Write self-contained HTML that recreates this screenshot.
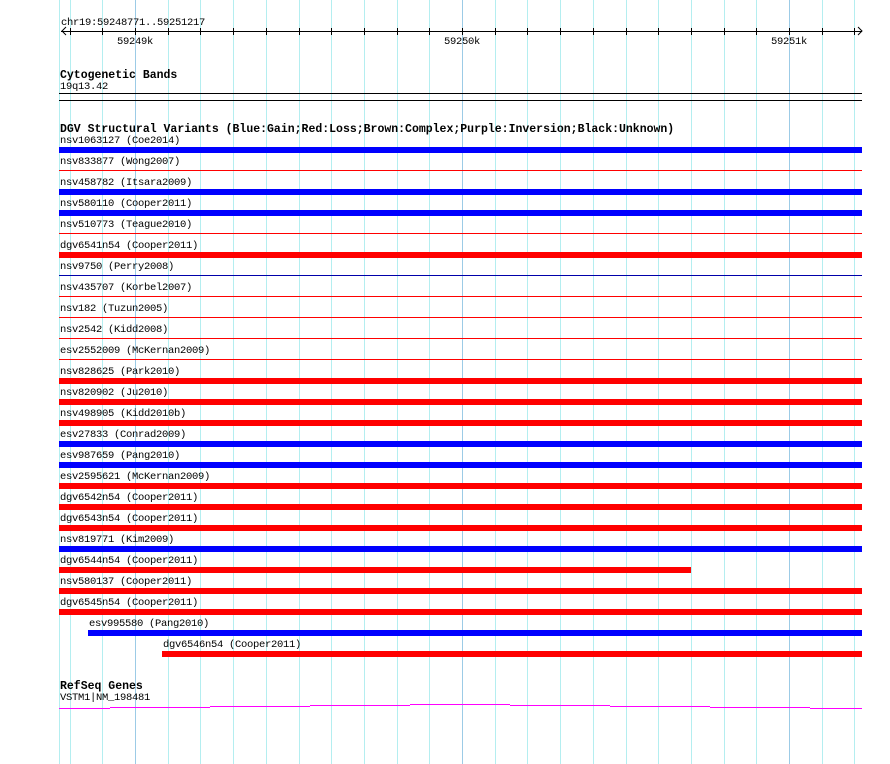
<!DOCTYPE html>
<html><head><meta charset="utf-8"><style>
body{margin:0;width:890px;height:764px;background:#fff;position:relative;overflow:hidden;font-family:"Liberation Mono","DejaVu Sans Mono",monospace;}
.g{position:absolute;top:0;height:764px;width:1px;background:#b4eef0;}
.G{background:#9ccbe6;}
.t{position:absolute;font-size:10.5px;letter-spacing:-0.3px;line-height:12px;color:#000;white-space:pre;}
.b{position:absolute;font-size:11.5px;line-height:13px;font-weight:bold;white-space:pre;}
.r{position:absolute;}
</style></head><body>
<div id="grid"></div>
<div class="t" style="left:61px;top:17px">chr19:59248771..59251217</div>
<div class="r" style="left:61px;top:31px;width:801px;height:1px;background:#000"></div>
<svg class="r" style="left:0;top:0" width="890" height="60">
<path d="M66 27 L62 31 L66 35 M858 27 L862 31 L858 35" stroke="#000" fill="none"/>
<g id="ticks" stroke="#000"></g>
</svg>
<div class="t" style="left:117px;top:36px">59249k</div>
<div class="t" style="left:444px;top:36px">59250k</div>
<div class="t" style="left:771px;top:36px">59251k</div>
<div class="b" style="left:60px;top:69px">Cytogenetic Bands</div>
<div class="t" style="left:60px;top:81px">19q13.42</div>
<div class="r" style="left:59px;top:93px;width:803px;height:1px;background:#000"></div>
<div class="r" style="left:59px;top:100px;width:803px;height:1px;background:#000"></div>
<div class="b" style="left:60px;top:123px">DGV Structural Variants (Blue:Gain;Red:Loss;Brown:Complex;Purple:Inversion;Black:Unknown)</div>
<div id="rows"></div>
<div class="b" style="left:60px;top:680px">RefSeq Genes</div>
<div class="t" style="left:60px;top:692px">VSTM1|NM_198481</div>
<svg class="r" style="left:0;top:0" width="890" height="764">
<path d="M59 708.5H110M110 707.5H210M210 706.5H310M310 705.5H410M410 704.5H510M510 705.5H610M610 706.5H710M710 707.5H810M810 708.5H862" stroke="#f0f" stroke-width="1" fill="none"/>
</svg>
<script>
var g=document.getElementById('grid'),h='';
h+='<div class="g" style="left:59px"></div>';
for(var k=-2;k<=22;k++){var x=Math.round(135+32.7*k);h+='<div class="g'+((k%10==0)?' G':'')+'" style="left:'+x+'px"></div>';}
g.innerHTML=h;
var tk=document.getElementById('ticks'),s='';
for(var k=-2;k<=22;k++){var x=Math.round(135+32.7*k)+0.5;s+='<line x1="'+x+'" y1="28" x2="'+x+'" y2="35"/>';}
tk.innerHTML=s;
var R=[["nsv1063127 (Coe2014)","#00f",1],["nsv833877 (Wong2007)","#f00",0],["nsv458782 (Itsara2009)","#00f",1],["nsv580110 (Cooper2011)","#00f",1],["nsv510773 (Teague2010)","#f00",0],["dgv6541n54 (Cooper2011)","#f00",1],["nsv9750 (Perry2008)","#00a",0],["nsv435707 (Korbel2007)","#f00",0],["nsv182 (Tuzun2005)","#f00",0],["nsv2542 (Kidd2008)","#f00",0],["esv2552009 (McKernan2009)","#f00",0],["nsv828625 (Park2010)","#f00",1],["nsv820902 (Ju2010)","#f00",1],["nsv498905 (Kidd2010b)","#f00",1],["esv27833 (Conrad2009)","#00f",1],["esv987659 (Pang2010)","#00f",1],["esv2595621 (McKernan2009)","#f00",1],["dgv6542n54 (Cooper2011)","#f00",1],["dgv6543n54 (Cooper2011)","#f00",1],["nsv819771 (Kim2009)","#00f",1],["dgv6544n54 (Cooper2011)","#f00",1,59,691],["nsv580137 (Cooper2011)","#f00",1],["dgv6545n54 (Cooper2011)","#f00",1],["esv995580 (Pang2010)","#00f",1,88,862],["dgv6546n54 (Cooper2011)","#f00",1,162,862]];
var o='';
R.forEach(function(r,i){var y=147+21*i;var x0=r[3]||59,x1=r[4]||862;
o+='<div class="t" style="left:'+(x0+1)+'px;top:'+(y-12)+'px">'+r[0]+'</div>';
if(r[2])o+='<div class="r" style="left:'+x0+'px;top:'+y+'px;width:'+(x1-x0)+'px;height:6px;background:'+r[1]+'"></div>';
else o+='<div class="r" style="left:'+x0+'px;top:'+(y+2)+'px;width:'+(x1-x0)+'px;height:1px;background:'+r[1]+'"></div>';});
document.getElementById('rows').innerHTML=o;
</script>
</body></html>
